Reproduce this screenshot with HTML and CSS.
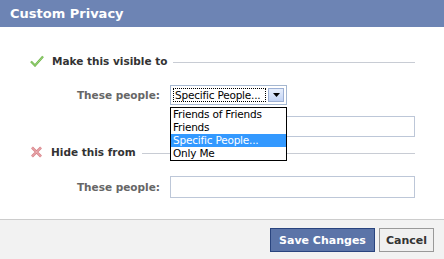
FILE: index.html
```html
<!DOCTYPE html>
<html>
<head>
<meta charset="utf-8">
<link rel="stylesheet" href="styles.css">
</head>
<body>
<div class="dialog">
  <div class="title">Custom Privacy</div>
  <div class="body">
    <div class="section-head first">
      <svg class="icon" width="14" height="12" viewBox="0 0 14 12"><path d="M1 6.5 L5 10.5 L13 1.5" fill="none" stroke="#6fb54a" stroke-width="2.2"/><path d="M1 6.5 L5 10.5 L13 1.5" fill="none" stroke="#a8dc8a" stroke-width="0.8"/></svg>
      <span class="head-text">Make this visible to</span>
      <span class="rule"></span>
    </div>
    <div class="field">
      <span class="label">These people:</span>
      <div class="select-wrap">
        <div class="select">
          <span class="sel-text">Specific People...</span>
          <span class="sel-btn"><svg width="9" height="5" viewBox="0 0 9 5"><path d="M1 0 H8 L4.5 4 Z" fill="#000"/></svg></span>
        </div>
        <ul class="list">
          <li>Friends of Friends</li>
          <li>Friends</li>
          <li class="hl">Specific People...</li>
          <li>Only Me</li>
        </ul>
      </div>
    </div>
    <div class="field extra">
      <span class="label"></span>
      <div class="input"></div>
    </div>
    <div class="section-head second">
      <svg class="icon" width="13" height="12" viewBox="0 0 13 12"><path d="M2 1.5 L11 10.5 M11 1.5 L2 10.5" stroke="#d9848a" stroke-width="2.6"/><path d="M2 1.5 L11 10.5 M11 1.5 L2 10.5" stroke="#f2c4c6" stroke-width="0.8"/></svg>
      <span class="head-text">Hide this from</span>
      <span class="rule"></span>
    </div>
    <div class="field last">
      <span class="label">These people:</span>
      <div class="input tall"></div>
    </div>
  </div>
  <div class="footer">
    <button class="btn primary">Save Changes</button>
    <button class="btn">Cancel</button>
  </div>
</div>
</body>
</html>
```
FILE: styles.css
```css
* { box-sizing: border-box; }
html, body { margin: 0; padding: 0; background: #fff; }
body { font-family: "DejaVu Sans", Tahoma, sans-serif; font-size: 11px; width: 444px; height: 259px; overflow: hidden; }
.dialog { width: 444px; height: 259px; display: flex; flex-direction: column; }
.title { height: 27px; background: #6d84b4; color: #fff; font-weight: bold; font-size: 13px; padding-left: 10px; line-height: 27px; }
.body { flex: 1; padding: 0 29px 0 30px; }
.section-head { display: flex; align-items: center; height: 14px; }
.section-head.first { margin-top: 27px; }
.section-head.second { margin-top: 8px; }
.icon { flex: none; margin-right: 8px; }
.head-text { font-weight: bold; color: #333; font-size: 10.5px; margin-right: 6px; white-space: nowrap; }
.rule { flex: 1; height: 1px; background: #c8ccd4; margin-top: 2px; }
.field { display: flex; align-items: center; margin-top: 17px; }
.field.extra { margin-top: 11px; }
.label { width: 140px; text-align: right; padding-right: 10px; font-weight: bold; color: #666; font-size: 10.5px; flex: none; }
.select-wrap { position: relative; width: 117px; height: 20px; }
.select { width: 117px; height: 20px; border: 1px solid #a5b7d0; background: #fff; padding: 2px; display: flex; }
.sel-text { flex: 1; border: 1px dotted #000; font-size: 10.5px; line-height: 12px; padding-left: 1px; white-space: nowrap; overflow: hidden; color: #000; margin-right: 2px; letter-spacing: -0.2px; }
.sel-btn { width: 16px; flex: none; border: 1px solid #9db0d4; background: linear-gradient(#e6eefc, #c3d4f5); display: flex; align-items: center; justify-content: center; }
.list { position: absolute; left: 0; top: 22px; width: 117px; margin: 0; padding: 0; list-style: none; background: #fff; border: 1px solid #000; z-index: 2; }
.list li { height: 13px; line-height: 13px; padding-left: 2px; font-size: 10.5px; color: #000; white-space: nowrap; letter-spacing: -0.2px; }
.list li.hl { background: #3399ff; color: #fff; }
.input { width: 245px; height: 21px; border: 1px solid #bdc7d8; background: #fff; }
.input.tall { height: 22px; }
.footer { height: 40px; border-top: 1px solid #cccccc; background: #f2f2f2; display: flex; justify-content: flex-end; align-items: flex-start; padding: 8px 10px 0 0; gap: 4px; }
.btn { height: 24px; font-family: "DejaVu Sans", Tahoma, sans-serif; font-weight: bold; font-size: 11px; padding: 0 6px; border: 1px solid #999; background: #f0f0f0; color: #333; }
.btn.primary { background: #5b74a8; border-color: #29447e; color: #fff; width: 105px; }
.btn:not(.primary) { width: 55px; }
```
